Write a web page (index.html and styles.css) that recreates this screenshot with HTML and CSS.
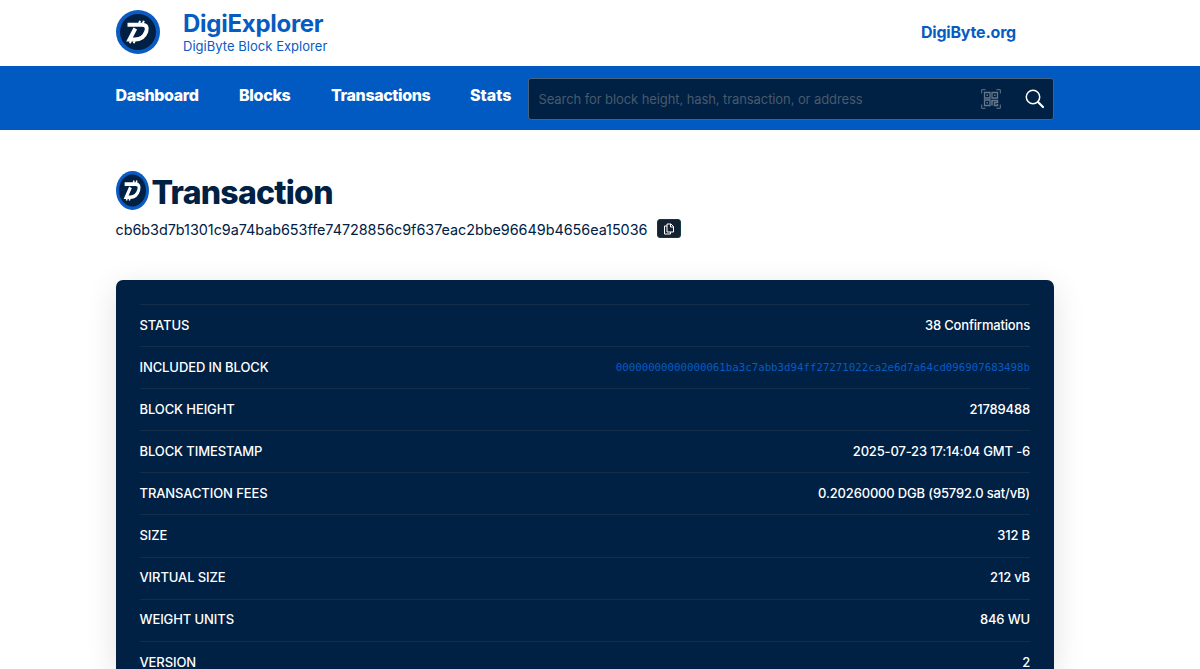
FILE: index.html
```
<!DOCTYPE html>
<html lang="en">
<head>
  <meta charset="UTF-8" />
  <meta name="viewport" content="width=device-width, initial-scale=1.0"/>
  <title>DigiExplorer</title>
  <link rel="stylesheet" href="styles.css">
</head>
<body>
  <!-- Shared logo -->
  <svg width="0" height="0" class="defs">
    <symbol id="logo" viewBox="0 0 44 44" preserveAspectRatio="none">
      <circle cx="22" cy="22" r="22" fill="#0a5cc4"/>
      <circle cx="22" cy="22" r="18" fill="#002044"/>
      <g fill="none" stroke="#fff">
        <path d="M11.500 14.800H26C30.300 14.800 31.700 17.500 30.300 21.500C28.500 26.500 24.500 29.600 19 29.600H13.500L19.300 18.500" stroke-width="4"/>
        <path d="M23 14L24 10.800M26.800 14L27.800 10.800M14 33.200L15 30M17.800 33.200L18.800 30" stroke-width="2"/>
      </g>
    </symbol>
  </svg>

  <header class="top">
    <div class="container top-row">
      <a class="brand" href="#">
        <svg class="brand-logo"><use href="#logo"/></svg>
        <div>
          <div class="brand-name">DigiExplorer</div>
          <div class="brand-sub">DigiByte Block Explorer</div>
        </div>
      </a>
      <a class="org-link" href="#">DigiByte.org</a>
    </div>
  </header>

  <nav class="navbar">
    <div class="container nav-row">
      <a class="nav-link nav-dashboard" href="#">Dashboard</a>
      <a class="nav-link nav-blocks" href="#">Blocks</a>
      <a class="nav-link nav-tx" href="#">Transactions</a>
      <a class="nav-link nav-stats" href="#">Stats</a>
      <div class="search">
        <span class="placeholder">Search for block height, hash, transaction, or address</span>
        <svg class="qr" viewBox="0 0 20 20" fill="none" stroke="#65788b">
          <path d="M.7 4.500V.7H4.500M15.500.7H19.300V4.500M.7 15.500V19.300H4.500M15.500 19.300H19.300V15.500"/>
          <path d="M3.500 3.500H9V9H3.500ZM11 3.500H16.500V9H11ZM3.500 11H9V16.500H3.500Z" stroke-width="1.300"/>
          <path d="M5.500 6.200H7M13 6.200H14.500M5.500 13.700H7M11 16.500V11.500H16.500V13.500H13.500V16.500H16.500V15" stroke-width="1.500"/>
        </svg>
        <svg class="magnifier" viewBox="0 0 20 20" fill="none" stroke="#fff">
          <circle cx="8" cy="8" r="6.700" stroke-width="1.500"/>
          <path d="M13 13L18 18" stroke-width="2.200" stroke-linecap="round"/>
        </svg>
      </div>
    </div>
  </nav>

  <main class="container">
    <h1 class="title">
      <svg class="title-logo"><use href="#logo"/></svg>
      <span>Transaction</span>
    </h1>
    <div class="txid-row">
      <span class="txid">cb6b3d7b1301c9a74bab653ffe74728856c9f637eac2bbe96649b4656ea15036</span>
      <button class="copy-btn">
        <svg viewBox="0 0 12 12" fill="none" stroke="#fff">
          <path d="M4 3H1.500V11H7.500V9M4 1H8L10.500 3.500V9H4ZM7.500 1V4H10.500"/>
        </svg>
      </button>
    </div>

    <section class="card">
      <div class="row"><span class="label">STATUS</span><span class="value">38 Confirmations</span></div>
      <div class="row"><span class="label">INCLUDED IN BLOCK</span><a class="hash" href="#">00000000000000061ba3c7abb3d94ff27271022ca2e6d7a64cd096907683498b</a></div>
      <div class="row"><span class="label">BLOCK HEIGHT</span><span class="value">21789488</span></div>
      <div class="row"><span class="label">BLOCK TIMESTAMP</span><span class="value">2025-07-23 17:14:04 GMT -6</span></div>
      <div class="row"><span class="label">TRANSACTION FEES</span><span class="value">0.20260000 DGB (95792.0 sat/vB)</span></div>
      <div class="row"><span class="label">SIZE</span><span class="value">312 B</span></div>
      <div class="row"><span class="label">VIRTUAL SIZE</span><span class="value">212 vB</span></div>
      <div class="row"><span class="label">WEIGHT UNITS</span><span class="value">846 WU</span></div>
      <div class="row"><span class="label">VERSION</span><span class="value">2</span></div>
    </section>
  </main>
</body>
</html>
```
FILE: styles.css
```
* {
  box-sizing: border-box;
}

body {
  margin: 0;
  height: 100vh;
  overflow: hidden;
  background: #fff;
  color: #002044;
  font-family: Inter, "Liberation Sans", sans-serif;
}

a {
  color: inherit;
  text-decoration: none;
}

.defs {
  display: block;
}

.container {
  width: 938.5px;
  margin-left: 115.5px;
}

.top-row {
  height: 66px;
  display: flex;
  align-items: center;
  justify-content: space-between;
  padding-bottom: 2px;
  color: #075cc1;
}

.brand {
  display: flex;
  align-items: center;
  gap: 23.5px;
}

.brand-logo {
  width: 44px;
  height: 44px;
}

.brand-name {
  font-size: 24px;
  font-weight: 700;
  line-height: 28px;
  letter-spacing: -0.27px;
}

.brand-sub {
  font-size: 13px;
  line-height: 16px;
  letter-spacing: 0.03px;
}

.org-link {
  margin-right: 38px;
  font-size: 16px;
  font-weight: 700;
  letter-spacing: -0.2px;
}

.navbar {
  height: 64px;
  background: #005ac2;
}

.nav-row {
  height: 64px;
  display: flex;
  align-items: center;
}

.nav-link {
  color: #fff;
  font-size: 16px;
  font-weight: 800;
  letter-spacing: -0.38px;
  white-space: nowrap;
  padding-bottom: 7px;
}

.nav-dashboard {
  width: 123.5px;
}

.nav-blocks {
  width: 92px;
  letter-spacing: -0.3px;
}

.nav-tx {
  width: 139px;
}

.nav-stats {
  width: 57.5px;
  letter-spacing: 0;
}

.search {
  width: 526.5px;
  height: 42px;
  flex: none;
  display: flex;
  align-items: center;
  margin-top: 1px;
  padding: 0 8px 0 10px;
  background: #002044;
  border: 1px solid #47617e;
  border-radius: 3px;
}

.placeholder {
  flex: 1;
  color: #485a6c;
  font-size: 13px;
  letter-spacing: -0.09px;
}

.qr {
  width: 20px;
  height: 20px;
  margin-right: 24px;
}

.magnifier {
  width: 20px;
  height: 20px;
}

.title {
  display: flex;
  align-items: center;
  gap: 3px;
  margin: 40px 0 0;
  height: 40px;
  font-size: 32px;
  font-weight: 800;
  letter-spacing: -0.75px;
}

.title span {
  padding-top: 4px;
}

.title-logo {
  width: 33px;
  height: 39px;
}

.txid-row {
  display: flex;
  align-items: center;
  gap: 10px;
  height: 38px;
}

.txid {
  font-size: 14.4px;
  letter-spacing: -0.04px;
}

.copy-btn {
  width: 24px;
  height: 19px;
  margin-bottom: 1px;
  padding: 0;
  display: flex;
  align-items: center;
  justify-content: center;
  background: #142130;
  border: 1px solid #0e3b45;
  border-radius: 3px;
}

.copy-btn svg {
  width: 12px;
  height: 12px;
}

.card {
  height: 389px;
  margin-top: 32px;
  padding: 24px 24px 0;
  overflow: hidden;
  background: #002044;
  color: #fff;
  border-radius: 7px 7px 0 0;
  box-shadow: 0 8px 32px rgba(0, 0, 0, 0.12);
}

.row {
  height: 42.1px;
  display: flex;
  align-items: center;
  justify-content: space-between;
  padding-bottom: 1.5px;
  border-top: 1px solid #142e48;
  font-size: 13px;
  font-weight: 500;
}

.label {
  letter-spacing: -0.1px;
}

.value {
  letter-spacing: -0.17px;
}

.hash {
  padding-top: 2px;
  color: #075cc1;
  font-family: "DejaVu Sans Mono", monospace;
  font-size: 10.75px;
  font-weight: 400;
}
```
